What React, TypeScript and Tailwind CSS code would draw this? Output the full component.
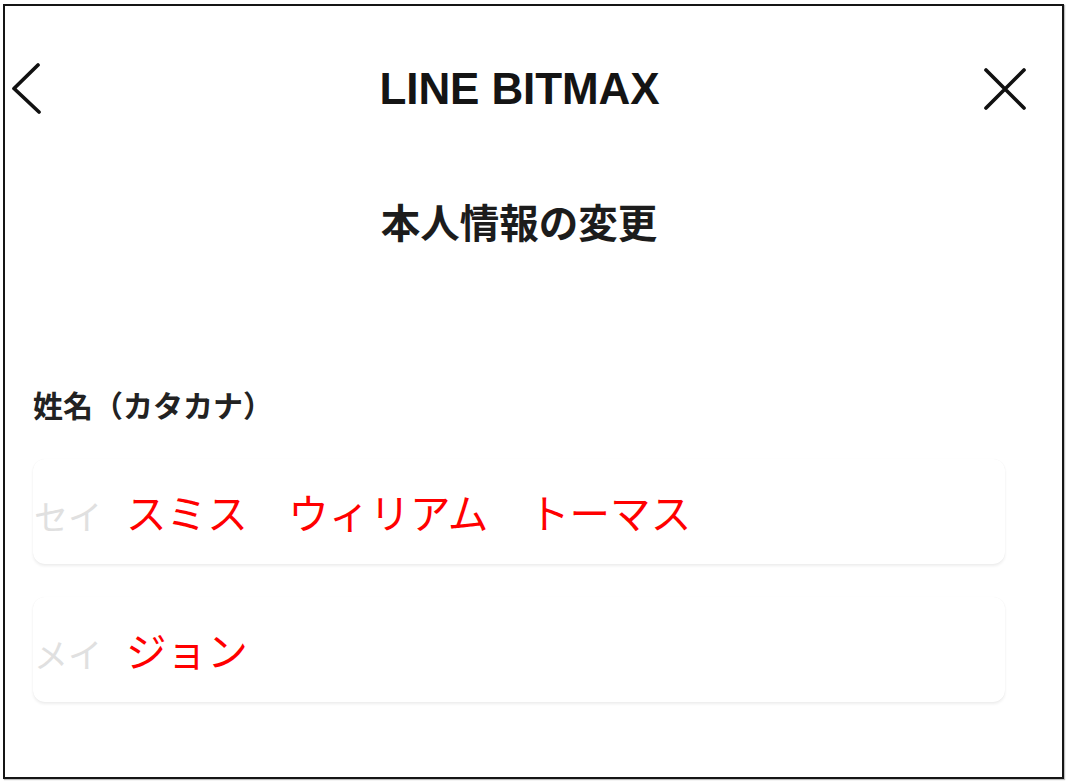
// 本人情報の変更画面（カタカナ氏名入力）

const jp = "font-['Noto_Sans_CJK_JP','Noto_Sans',sans-serif]"

function BackIcon() {
  return (
    <svg width="32" height="54" viewBox="0 0 32 54" fill="none">
      <path d="M26 3 L2 26.5 L27 50" stroke="#111" strokeWidth="3.7" strokeLinecap="round" strokeLinejoin="round" />
    </svg>
  )
}

function CloseIcon() {
  return (
    <svg width="44" height="44" viewBox="0 0 44 44" fill="none">
      <path d="M3 3 L41 41 M41 3 L3 41" stroke="#111" strokeWidth="3.7" strokeLinecap="round" />
    </svg>
  )
}

interface NameFieldProps {
  placeholder: string
  value: string
}

function NameField({ placeholder, value }: NameFieldProps) {
  return (
    <div className="h-[105px] rounded-[12px] bg-white shadow-[0_2px_3px_rgba(0,0,0,0.07),0_0_1px_rgba(0,0,0,0.06)] flex items-center pl-[1px]">
      <span className={`${jp} w-[92px] text-[34px] leading-[34px] text-[#e0e0e0] translate-y-[4px]`}>{placeholder}</span>
      <span className={`${jp} text-[40.6px] leading-[40px] text-[#ff0000] whitespace-pre`}>{value}</span>
    </div>
  )
}

export default function App() {
  return (
    <div className="w-[1069px] h-[784px] bg-white pl-[3px] pt-[4px]">
      <div className="w-[1061px] h-[775px] border-2 border-[#151515] shadow-[1px_1px_1px_rgba(0,0,0,0.25)] bg-white">
        <div className="w-[1028px]">
          {/* ヘッダー */}
          <div className="mt-[39px] h-[88px] grid grid-cols-[80px_1fr_80px] items-center pl-[7px] pr-[6px]">
            <div className="flex justify-start"><BackIcon /></div>
            <h1 className="text-center font-['Liberation_Sans',Arial,sans-serif] font-bold text-[44px] leading-[44px] text-[#141414] tracking-[-0.1px]">
              LINE BITMAX
            </h1>
            <div className="flex justify-end"><CloseIcon /></div>
          </div>

          <h2 className={`${jp} mt-[68px] text-center font-bold text-[39.5px] leading-[40px] text-[#1c1c1c]`}>
            本人情報の変更
          </h2>

          <div className="mt-[148px] px-[28px]">
            <p className={`${jp} font-bold text-[30px] leading-[30px] text-[#222]`}>姓名（カタカナ）</p>
            <div className="mt-[40px] flex flex-col gap-[33px]">
              <NameField placeholder="セイ" value="スミス　ウィリアム　トーマス" />
              <NameField placeholder="メイ" value="ジョン" />
            </div>
          </div>
        </div>
      </div>
    </div>
  )
}
